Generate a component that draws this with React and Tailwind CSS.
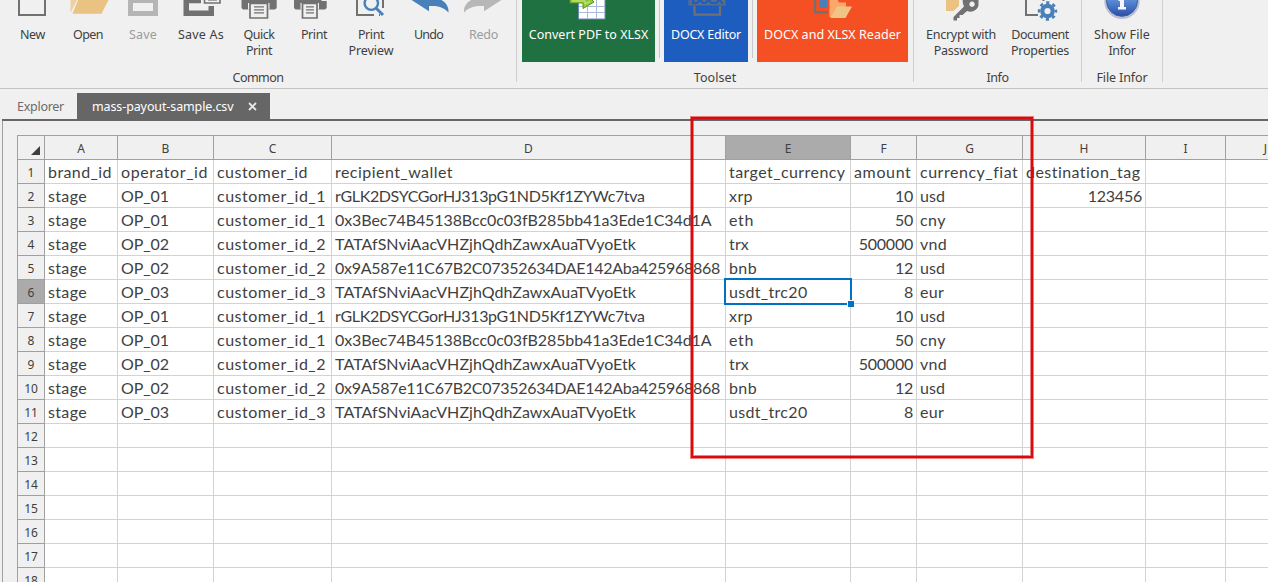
import React, { useLayoutEffect, useRef, useState } from 'react';

// Text run whose tracking is adjusted so that it spans the given width.
function Fit({ w, children }) {
  const ref = useRef(null);
  const [sp, setSp] = useState(0);
  useLayoutEffect(() => {
    const n = ref.current.textContent.length;
    const natural = ref.current.getBoundingClientRect().width - sp * n;
    setSp((w - natural) / n);
  }, [w]);
  return (
    <span ref={ref} className="inline-block whitespace-pre" style={{ letterSpacing: `${sp}px` }}>
      {children}
    </span>
  );
}

const D = '#717171';
const B = '#4a80ba';
const Y = '#eac282';

const icons = {
  new: <path d="M19-5V15H45V-5" fill="none" stroke={D} strokeWidth="2" />,
  open: (
    <g>
      <path d="M70.5-1H77.5L71 12H70.5Z" fill="#f0cf9f" />
      <path d="M78.5-1H109L101.5 13.8H72.5Z" fill={Y} />
    </g>
  ),
  save: <path fillRule="evenodd" d="M128-2H158V16H128ZM133 3V11H153V3Z" fill="#b5b5b5" />,
  saveAs: (
    <g>
      <path d="M183.5-2H201V3.3H189V10.5H208.5V6H214V16H183.5Z" fill={D} />
      <path d="M204.5-3V3H220V-3" fill="none" stroke={D} strokeWidth="1.6" />
      <path d="M208 0H217" stroke={D} strokeWidth="1.2" />
    </g>
  ),
  quick: (
    <g>
      <path d="M241.5-1H276.7V8L275 9.5H243L241.5 8Z" fill={D} />
      <path d="M248 3H269.5V9.5H248Z" fill="#efefef" />
      <path d="M250 3.5H267.5V18H250Z" fill="#efefef" stroke={D} strokeWidth="1.7" />
      <path d="M254 6.8H264M254 9.8H264M254 12.8H264" stroke={D} strokeWidth="1.2" />
    </g>
  ),
  print: (
    <g>
      <path d="M294-1H320L322 1H326.7V8L325 9.5H295.5L294 8Z" fill={D} />
      <path d="M300.5 3H319V9.5H300.5Z" fill="#efefef" />
      <path d="M302.5 3.5H317V18H302.5Z" fill="#efefef" stroke={D} strokeWidth="1.7" />
      <path d="M306 6.8H314M306 9.8H314M306 12.8H314" stroke={D} strokeWidth="1.2" />
    </g>
  ),
  preview: (
    <g fill="none">
      <path d="M357-2V15H374M383 0V8M379 15H380" stroke={D} strokeWidth="2" />
      <circle cx="371.3" cy="3.2" r="6.7" stroke={B} strokeWidth="2.4" />
      <path d="M376.2 8.3L383 15" stroke={B} strokeWidth="3" />
    </g>
  ),
  undo: <path d="M410-1L429 11.3V6C437 5.5 444 7 448.5 12.5C449 6 445 1 439-1Z" fill={B} />,
  redo: <path d="M503-1L484 11.3V6C476 5.5 468.500 7 464 12.5C463.500 6 467.500 1 473.500-1Z" fill="#b7b7b7" />,
  convert: (
    <g>
      <path d="M578.500-1H605V19H578.500Z" fill="#fff" stroke="#6f87b8" />
      <path d="M579 6.500H605M579 12.500H605M587.500 0V19M596.500 0V19" stroke="#a9bbdc" />
      <path d="M570-1V3H583V8.500L594 2L591-1Z" fill="#94cb3c" stroke="#5a9418" />
      <path d="M572 1H585V4L590 1.500" fill="none" stroke="#cbe98e" />
    </g>
  ),
  docx: (
    <g>
      <path d="M688.500-2H725.500V5.500H688.500Z" fill="#5a6c8c" />
      <path d="M694.500 6V14.700H720V6" fill="none" stroke={D} strokeWidth="2.2" />
      <text x="707" y="3.500" textAnchor="middle" textLength="33" fontFamily="DejaVu Sans" fontWeight="700" fontSize="12" fill="#1d5dc0">
        DOCX
      </text>
    </g>
  ),
  reader: (
    <g>
      <path d="M815-2V12.300H828" fill="none" stroke={D} strokeWidth="2.400" />
      <path d="M819.500-1H827V8H819.500Z" fill={B} />
      <path d="M829.500-1H837L839 2.500H846V6L834 17H829.500Z" fill="#fba96a" />
      <path d="M837 6.500H852L845.500 18H830.500Z" fill="#f0c484" />
    </g>
  ),
  encrypt: (
    <g>
      <path d="M946-1H959V6L953.500 11H946Z" fill={Y} />
      <path fillRule="evenodd" d="M963-2H978.500V5C978 10 972 13 967 11L962.500 15H959.500V18H957V20.500H953.500V17L964 6.500C962.500 3 962.500 1 963-2ZM972 1.500A2.700 2.700 0 1 0 972.100 1.500Z" fill={D} />
    </g>
  ),
  props: (
    <g>
      <path d="M1026-2V15H1038M1043.500-1V1" fill="none" stroke={D} strokeWidth="2" />
      <circle cx="1047.500" cy="11" r="5.200" fill="none" stroke={B} strokeWidth="4.200" />
      <circle cx="1047.500" cy="11" r="8.400" fill="none" stroke={B} strokeWidth="2.600" strokeDasharray="3.300 3.297" strokeDashoffset="1.650" />
    </g>
  ),
  info: (
    <g>
      <defs>
        <linearGradient id="orb" x1="0" y1="0" x2="0" y2="1">
          <stop offset="0.500" stopColor="#5a8ad4" />
          <stop offset="1" stopColor="#2b4da6" />
        </linearGradient>
      </defs>
      <circle cx="1122" cy="1.300" r="17.700" fill="#b9c0cf" />
      <circle cx="1122" cy="0.800" r="15.500" fill="url(#orb)" stroke="#395da9" />
      <path d="M1118.500-1H1124V7H1126V9.500H1118V7H1120V1H1118.500Z" fill="#f4f7ff" />
    </g>
  ),
};

// x: left edge of the button, w: its width, lines: [label, width]
const common = [
  { icon: 'new', x: 5, w: 55, lines: [['New', 25]] },
  { icon: 'open', x: 60, w: 56, lines: [['Open', 30]] },
  { icon: 'save', x: 116, w: 54, lines: [['Save', 28]], off: true },
  { icon: 'saveAs', x: 170, w: 62, lines: [['Save As', 46]] },
  { icon: 'quick', x: 232, w: 54, lines: [['Quick', 31], ['Print', 26]] },
  { icon: 'print', x: 286, w: 56, lines: [['Print', 26]] },
  { icon: 'preview', x: 342, w: 58, lines: [['Print', 26], ['Preview', 45]] },
  { icon: 'undo', x: 400, w: 57, lines: [['Undo', 29]] },
  { icon: 'redo', x: 457, w: 53, lines: [['Redo', 29]], off: true },
];
const info = [
  { icon: 'encrypt', x: 921, w: 80, lines: [['Encrypt with', 70], ['Password', 54.500]] },
  { icon: 'props', x: 1001, w: 78, lines: [['Document', 57.500], ['Properties', 58]] },
];
const fileInfo = [{ icon: 'info', x: 1088, w: 68, lines: [['Show File', 56], ['Infor', 27]] }];

function Button({ b, className = '' }) {
  return (
    <div
      className={`shrink-0 text-center leading-4 ${b.off ? 'text-[#9c9c9c]' : ''} ${className}`}
      style={{ width: b.w }}
    >
      <svg className="block" width={b.w} height="27" viewBox={`${b.x} 0 ${b.w} 27`}>
        {icons[b.icon]}
      </svg>
      {b.lines.map(([t, w]) => (
        <div key={t} className="flex h-4 justify-center">
          <Fit w={w}>{t}</Fit>
        </div>
      ))}
    </div>
  );
}

function Group({ className, inset, label, labelWidth, children }) {
  return (
    <div className={`flex h-[82px] shrink-0 flex-col justify-between border-r border-[#cfcfcf] ${className}`}>
      <div className={`flex ${inset}`}>{children}</div>
      <div className="-mb-[4px] flex justify-center leading-4">
        <Fit w={labelWidth}>{label}</Fit>
      </div>
    </div>
  );
}

const Divider = () => <div className="mx-[4px] h-[58px] w-px shrink-0 bg-[#c8c8c8]" />;

const cols = [
  { n: 'A', c: 'w-[73px]' },
  { n: 'B', c: 'w-[96px]' },
  { n: 'C', c: 'w-[118px]' },
  { n: 'D', c: 'w-[394px]' },
  { n: 'E', c: 'w-[125px]' },
  { n: 'F', c: 'w-[66px]' },
  { n: 'G', c: 'w-[106px]' },
  { n: 'H', c: 'w-[123px]' },
  { n: 'I', c: 'w-[80px]' },
  { n: 'J', c: 'w-[80px]' },
];

const widths = {
  brand_id: 64, operator_id: 87, customer_id: 91, recipient_wallet: 118, target_currency: 116.500,
  amount: 57.500, currency_fiat: 98, destination_tag: 115, stage: 39,
  OP_01: 48, OP_02: 48, OP_03: 48, customer_id_1: 109, customer_id_2: 109, customer_id_3: 109,
  rGLK2DSYCGorHJ313pG1ND5Kf1ZYWc7tva: 309.500,
  '0x3Bec74B45138Bcc0c03fB285bb41a3Ede1C34d1A': 376.500,
  TATAfSNviAacVHZjhQdhZawxAuaTVyoEtk: 301,
  '0x9A587e11C67B2C07352634DAE142Aba425968868': 385,
  xrp: 24, eth: 25, trx: 20, bnb: 28, usdt_trc20: 78.500, usd: 25, cny: 26, vnd: 27, eur: 24,
};

const W1 = 'rGLK2DSYCGorHJ313pG1ND5Kf1ZYWc7tva';
const W2 = '0x3Bec74B45138Bcc0c03fB285bb41a3Ede1C34d1A';
const W3 = 'TATAfSNviAacVHZjhQdhZawxAuaTVyoEtk';
const W4 = '0x9A587e11C67B2C07352634DAE142Aba425968868';

const payouts = [
  ['stage', 'OP_01', 'customer_id_1', W1, 'xrp', '10', 'usd'],
  ['stage', 'OP_01', 'customer_id_1', W2, 'eth', '50', 'cny'],
  ['stage', 'OP_02', 'customer_id_2', W3, 'trx', '500000', 'vnd'],
  ['stage', 'OP_02', 'customer_id_2', W4, 'bnb', '12', 'usd'],
  ['stage', 'OP_03', 'customer_id_3', W3, 'usdt_trc20', '8', 'eur'],
];
const rows = [
  ['brand_id', 'operator_id', 'customer_id', 'recipient_wallet', 'target_currency', 'amount', 'currency_fiat', 'destination_tag'],
  [...payouts[0], '123456'],
  ...payouts.slice(1),
  ...payouts,
  [], [], [], [], [], [], [],
];

function Cell({ text, col, active }) {
  const numeric = text && /^\d+$/.test(text);
  return (
    <div
      className={`relative flex h-6 shrink-0 border-r border-b border-[#d3d3d3] px-[3px] leading-6 ${col.c} ${numeric ? 'justify-end' : ''}`}
    >
      {text && <Fit w={numeric ? text.length * 9.050 : widths[text]}>{text}</Fit>}
      {active && (
        <div className="absolute -top-[2px] -left-[2px] z-10 h-[27px] w-[128px] border-2 border-[#0072c6]">
          <div className="absolute -right-[4px] -bottom-[4px] h-[7px] w-[7px] border-t border-l border-white bg-[#0072c6]" />
        </div>
      )}
    </div>
  );
}

export default function App() {
  return (
    <div className="relative flex h-[582px] w-[1268px] flex-col overflow-hidden bg-[#f0f0f0] font-['Noto_Sans',sans-serif] text-[12.500px] text-[#3f3f3f]">
      <header className="flex h-[89px] shrink-0 border-b border-[#c4c4c4]">
        <Group className="w-[517px]" inset="pl-[5px]" label="Common" labelWidth={51}>
          {common.map((b) => (
            <Button key={b.icon} b={b} />
          ))}
        </Group>
        <Group className="w-[397px]" inset="pl-[5px]" label="Toolset" labelWidth={42.500}>
          <Button b={{ icon: 'convert', x: 522, w: 133, lines: [['Convert PDF to XLSX', 119.500]] }} className="h-[62px] bg-[#1f7142] text-white" />
          <Divider />
          <Button b={{ icon: 'docx', x: 664, w: 84, lines: [['DOCX Editor', 70]] }} className="h-[62px] bg-[#1d5dc0] text-white" />
          <Divider />
          <Button b={{ icon: 'reader', x: 757, w: 151, lines: [['DOCX and XLSX Reader', 137]] }} className="h-[62px] bg-[#f55024] text-white" />
        </Group>
        <Group className="w-[168px]" inset="pl-[7px]" label="Info" labelWidth={22}>
          {info.map((b) => (
            <Button key={b.icon} b={b} />
          ))}
        </Group>
        <Group className="w-[81px]" inset="pl-[6px]" label="File Infor" labelWidth={51}>
          {fileInfo.map((b) => (
            <Button key={b.icon} b={b} />
          ))}
        </Group>
      </header>

      <nav className="ml-[2px] flex h-8 shrink-0 items-end border-b-2 border-[#666]">
        <div className="flex h-[26px] w-[75px] justify-center pl-[2px] leading-[28px] text-[#6b6b6b]">
          <Fit w={47}>Explorer</Fit>
        </div>
        <div className="flex h-[26px] w-[193px] items-center bg-[#666] pl-[15px] text-white">
          <div className="h-[26px] leading-[28px]">
            <Fit w={141.500}>mass-payout-sample.csv</Fit>
          </div>
          <svg className="ml-[14px]" width="9" height="9" viewBox="0 0 9 9">
            <path d="M1 1L8 8M8 1L1 8" stroke="#e8e8e8" strokeWidth="1.800" />
          </svg>
        </div>
      </nav>

      <main className="ml-[2px] flex flex-1 overflow-hidden border-l border-[#a0a0a0] pt-[14px] pl-[14px]">
        <div className="flex shrink-0 flex-col border-t border-l border-[#a0a0a0] bg-white">
          <div className="flex h-6 shrink-0 bg-[#f0f0f0] text-xs leading-[26px]">
            <div className="flex w-[27px] items-end justify-end border-r border-b border-[#a0a0a0] pr-[4px] pb-[4px]">
              <svg width="9" height="9" viewBox="0 0 9 9">
                <path d="M9 0V9H0Z" fill="#3f3f3f" />
              </svg>
            </div>
            {cols.map((c) => (
              <div
                key={c.n}
                className={`shrink-0 border-r border-b border-[#a0a0a0] text-center ${c.c} ${c.n === 'E' ? 'bg-[#ababab]' : ''}`}
              >
                {c.n}
              </div>
            ))}
          </div>
          {rows.map((r, i) => (
            <div key={i} className="flex h-6 shrink-0">
              <div
                className={`w-[27px] shrink-0 border-r border-b border-[#a0a0a0] text-center text-xs leading-[26px] ${i === 5 ? 'bg-[#ababab]' : 'bg-[#f0f0f0]'}`}
              >
                {i + 1}
              </div>
              <div className="flex font-['Lato',sans-serif] text-base">
                {cols.map((c, j) => (
                  <Cell key={c.n} text={r[j]} col={c} active={i === 5 && j === 4} />
                ))}
              </div>
            </div>
          ))}
        </div>
      </main>

      <div className="absolute top-[116px] left-[690px] z-20 h-[343px] w-[344px] border border-[#d9090c]/50">
        <div className="h-full w-full border-2 border-[#d9090c]">
          <div className="h-full w-full border border-[#d9090c]/50" />
        </div>
      </div>
    </div>
  );
}
